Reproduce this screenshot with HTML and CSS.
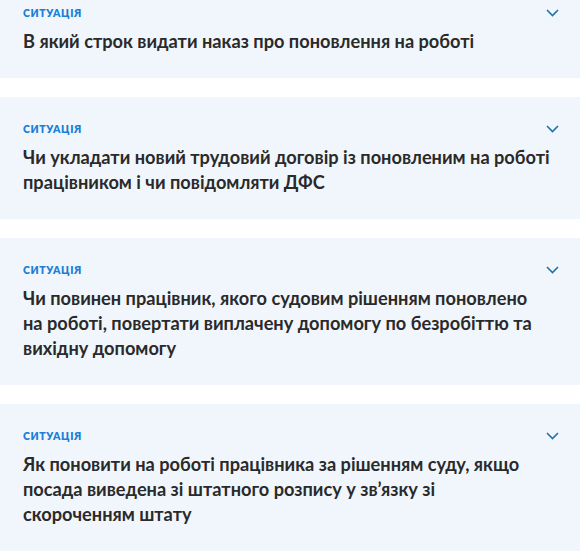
FILE: index.html
```html
<!DOCTYPE html>
<html lang="uk">
<head>
<meta charset="utf-8">
<link rel="stylesheet" href="styles.css">
</head>
<body>
<div class="list">
  <div class="card">
    <div class="head"><span class="label">Ситуація</span><svg class="chev" width="13" height="8" viewBox="0 0 13 8"><path d="M1 1 L6.5 6.5 L12 1" fill="none" stroke="#1f72a8" stroke-width="1.6"/></svg></div>
    <div class="title">В який строк видати наказ про поновлення на роботі</div>
  </div>
  <div class="card">
    <div class="head"><span class="label">Ситуація</span><svg class="chev" width="13" height="8" viewBox="0 0 13 8"><path d="M1 1 L6.5 6.5 L12 1" fill="none" stroke="#1f72a8" stroke-width="1.6"/></svg></div>
    <div class="title">Чи укладати новий трудовий договір із поновленим на роботі працівником і чи повідомляти ДФС</div>
  </div>
  <div class="card">
    <div class="head"><span class="label">Ситуація</span><svg class="chev" width="13" height="8" viewBox="0 0 13 8"><path d="M1 1 L6.5 6.5 L12 1" fill="none" stroke="#1f72a8" stroke-width="1.6"/></svg></div>
    <div class="title">Чи повинен працівник, якого судовим рішенням поновлено на&nbsp;роботі, повертати виплачену допомогу по безробіттю та вихідну допомогу</div>
  </div>
  <div class="card">
    <div class="head"><span class="label">Ситуація</span><svg class="chev" width="13" height="8" viewBox="0 0 13 8"><path d="M1 1 L6.5 6.5 L12 1" fill="none" stroke="#1f72a8" stroke-width="1.6"/></svg></div>
    <div class="title">Як поновити на роботі працівника за рішенням суду, якщо посада виведена зі штатного розпису у зв’язку зі скороченням&nbsp;штату</div>
  </div>
</div>
</body>
</html>
```
FILE: styles.css
```css
html, body {
  margin: 0;
  padding: 0;
  background: #ffffff;
}
body {
  font-family: "Lato", "Open Sans", sans-serif;
  overflow: hidden;
}
.list {
  display: flex;
  flex-direction: column;
  gap: 19px;
  margin-top: -19px;
}
.card {
  background: #f1f6fc;
  padding: 24px 21px 24px 23px;
}
.head {
  display: flex;
  justify-content: space-between;
  align-items: center;
  height: 16px;
}
.label {
  font-size: 10.5px;
  font-weight: 800;
  letter-spacing: 0.6px;
  text-transform: uppercase;
  color: #1a7fd6;
  line-height: 16px;
}
.chev {
  display: block;
}
.title {
  margin-top: 8px;
  margin-right: -2px;
  font-size: 18.2px;
  font-weight: 700;
  line-height: 25px;
  color: #2a2a2a;
}
```
